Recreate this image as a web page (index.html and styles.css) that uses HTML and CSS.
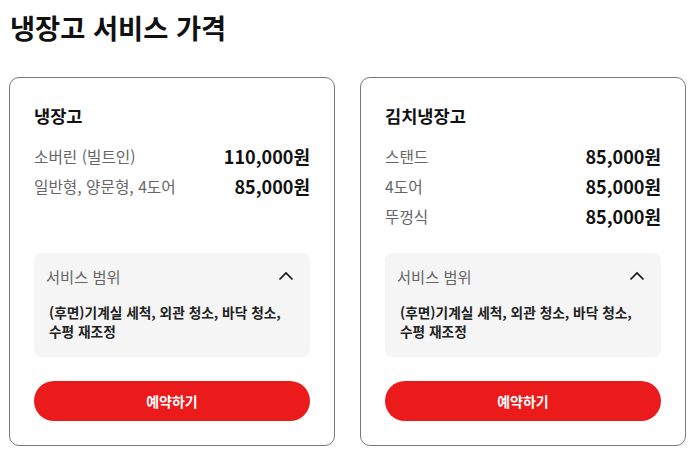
FILE: index.html
```html
<!DOCTYPE html>
<html lang="ko">
<head>
<meta charset="utf-8">
<title>냉장고 서비스 가격</title>
<link rel="stylesheet" href="styles.css">
</head>
<body>
<div class="page">
  <h1 class="page-title">냉장고 서비스 가격</h1>
  <div class="cards">
    <section class="card">
      <div class="card-body">
        <h2 class="card-title">냉장고</h2>
        <ul class="price-list">
          <li class="price-row"><span class="label">소버린 (빌트인)</span><span class="price">110,000원</span></li>
          <li class="price-row"><span class="label">일반형, 양문형, 4도어</span><span class="price">85,000원</span></li>
        </ul>
      </div>
      <div class="scope">
        <div class="scope-head">
          <span class="scope-title">서비스 범위</span>
          <svg class="chev" width="24" height="24" viewBox="0 0 24 24"><path d="M5.5 15.5 L12 9 L18.5 15.5" fill="none" stroke="#111" stroke-width="1.6"/></svg>
        </div>
        <p class="scope-desc">(후면)기계실 세척, 외관 청소, 바닥 청소,<br>수평 재조정</p>
      </div>
      <button class="btn">예약하기</button>
    </section>
    <section class="card">
      <div class="card-body">
        <h2 class="card-title">김치냉장고</h2>
        <ul class="price-list">
          <li class="price-row"><span class="label">스탠드</span><span class="price">85,000원</span></li>
          <li class="price-row"><span class="label">4도어</span><span class="price">85,000원</span></li>
          <li class="price-row"><span class="label">뚜껑식</span><span class="price">85,000원</span></li>
        </ul>
      </div>
      <div class="scope">
        <div class="scope-head">
          <span class="scope-title">서비스 범위</span>
          <svg class="chev" width="24" height="24" viewBox="0 0 24 24"><path d="M5.5 15.5 L12 9 L18.5 15.5" fill="none" stroke="#111" stroke-width="1.6"/></svg>
        </div>
        <p class="scope-desc">(후면)기계실 세척, 외관 청소, 바닥 청소,<br>수평 재조정</p>
      </div>
      <button class="btn">예약하기</button>
    </section>
  </div>
</div>
</body>
</html>
```

FILE: styles.css
```css
html, body {
  margin: 0;
  padding: 0;
  background: #fff;
}
body {
  font-family: "Noto Sans CJK KR", "Noto Sans", sans-serif;
  color: #111;
}
.page {
  padding: 7px 7px 0 9px;
}
.page-title {
  margin: 0 0 30px 1px;
  font-size: 27.3px;
  line-height: 40px;
  font-weight: 700;
  color: #111;
}
.cards {
  display: grid;
  grid-template-columns: 326px 326px;
  gap: 25px;
  align-items: stretch;
}
.card {
  border: 1px solid #777;
  border-radius: 10px;
  padding: 24px;
  display: flex;
  flex-direction: column;
}
.card-title {
  margin: 0 0 11px;
  font-size: 17.6px;
  line-height: 28px;
  font-weight: 700;
}
.price-list {
  list-style: none;
  margin: 0;
  padding: 0;
}
.price-row {
  display: flex;
  justify-content: space-between;
  align-items: center;
  height: 30px;
}
.label {
  font-size: 15.7px;
  color: #666;
}
.price {
  font-size: 18px;
  font-weight: 700;
  color: #111;
}
.scope {
  margin-top: auto;
  background: #f5f5f5;
  border-radius: 8px;
  padding: 12px 12px 16px;
}
.card-body {
  margin-bottom: 22px;
}
.scope-head {
  display: flex;
  justify-content: space-between;
  align-items: center;
  height: 22px;
}
.scope-title {
  font-size: 15.3px;
  color: #666;
}
.chev {
  display: block;
}
.scope-desc {
  margin: 16px 0 0;
  padding-left: 3px;
  font-size: 13.7px;
  line-height: 19px;
  font-weight: 700;
  color: #222;
}
.btn {
  margin-top: 24px;
  height: 40px;
  border: none;
  border-radius: 20px;
  background: #ec1b1b;
  color: #fff;
  font-family: inherit;
  font-size: 14px;
  font-weight: 700;
  cursor: pointer;
}
```
